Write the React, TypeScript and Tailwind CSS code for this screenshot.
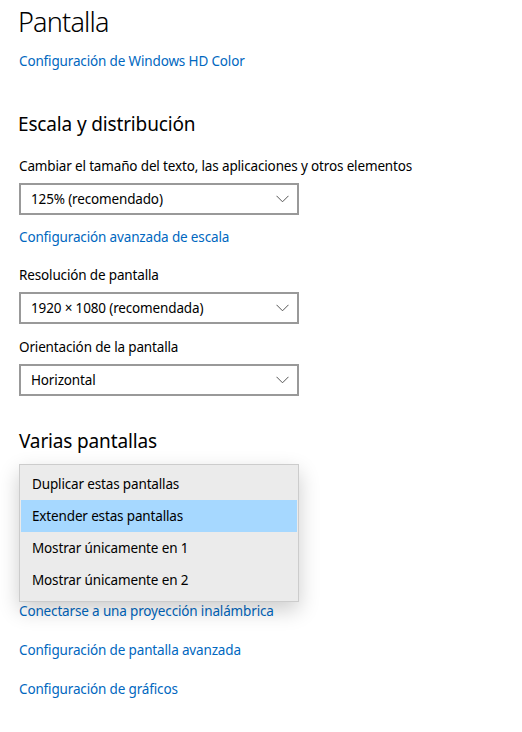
const font = { fontFamily: '"Noto Sans", "Open Sans", sans-serif' };

const Chevron = () => (
  <svg width="13" height="8" viewBox="0 0 13 8" fill="none">
    <path d="M0.5 0.8 L6.5 6.8 L12.5 0.8" stroke="#555" strokeWidth="1" />
  </svg>
);

const Select = ({ value, className = "" }: { value: string; className?: string }) => (
  <div
    className={`flex h-[32px] w-[280px] items-center justify-between border-2 border-[#999999] bg-white pl-[10px] pr-[8px] text-[13.5px] tracking-[-0.15px] text-black ${className}`}
  >
    <span>{value}</span>
    <Chevron />
  </div>
);

const Link = ({ children, className = "" }: { children: React.ReactNode; className?: string }) => (
  <div className={`h-[22px] text-[13.5px] leading-[22px] tracking-[-0.15px] text-[#0067c0] ${className}`}>
    {children}
  </div>
);

const Label = ({ children, className = "" }: { children: React.ReactNode; className?: string }) => (
  <div className={`h-[22px] text-[13.5px] leading-[22px] tracking-[-0.15px] text-black ${className}`}>
    {children}
  </div>
);

const options = [
  "Duplicar estas pantallas",
  "Extender estas pantallas",
  "Mostrar únicamente en 1",
  "Mostrar únicamente en 2",
];

export default function App() {
  return (
    <div className="min-h-[732px] w-[522px] bg-white pl-[19px]" style={font}>
      <h1 className="-ml-[1px] h-[44px] text-[27px] font-light leading-[44px] tracking-[-0.8px] text-black">
        Pantalla
      </h1>
      <Link className="mt-[6px]">Configuración de Windows HD Color</Link>

      <h2 className="-ml-[1px] mt-[38px] h-[28px] text-[19px] leading-[28px] tracking-[-0.15px] text-black">
        Escala y distribución
      </h2>
      <Label className="mt-[17px]">Cambiar el tamaño del texto, las aplicaciones y otros elementos</Label>
      <Select className="mt-[6px]" value="125% (recomendado)" />
      <Link className="mt-[11px]">Configuración avanzada de escala</Link>

      <Label className="mt-[16px]">Resolución de pantalla</Label>
      <Select className="mt-[6px]" value="1920 × 1080 (recomendada)" />
      <Label className="mt-[12px]">Orientación de la pantalla</Label>
      <Select className="mt-[6px]" value="Horizontal" />

      <div className="relative">
        <h2 className="mt-[31px] h-[28px] text-[19px] leading-[28px] tracking-[-0.15px] text-black">
          Varias pantallas
        </h2>
        <Select className="mt-[13px] invisible" value="Extender estas pantallas" />
        <Link className="mt-[100px]">Conectarse a una proyección inalámbrica</Link>
        <Link className="mt-[17px]">Configuración de pantalla avanzada</Link>
        <Link className="mt-[17px]">Configuración de gráficos</Link>

        <div className="absolute left-0 top-[37px] w-[280px] border border-[#cccccc] bg-[#ebebeb] pb-[5px] pt-[3px] shadow-[0_8px_20px_rgba(0,0,0,0.2)]">
          {options.map((o, i) => (
            <div
              key={o}
              className={`mx-[1px] flex h-[32px] items-center pl-[11px] text-[13.5px] tracking-[-0.15px] text-black ${
                i === 1 ? "bg-[#a6d8ff]" : ""
              }`}
            >
              {o}
            </div>
          ))}
        </div>
      </div>
    </div>
  );
}
